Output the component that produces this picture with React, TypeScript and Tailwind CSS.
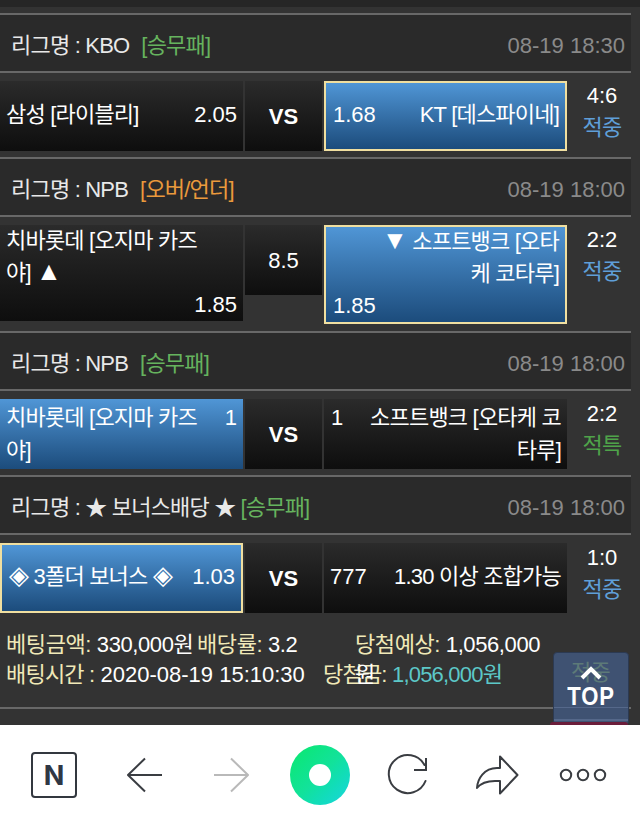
const blueCell = 'bg-gradient-to-b from-[#5096d6] to-[#1c4c7c]';
const darkCell = 'bg-gradient-to-b from-[#2b2b2b] to-[#0e0e0e]';
const ko = 'tracking-[-0.8px]';
const koLoose = 'tracking-[-0.4px]';

const Header = ({ league, tag, tagClass, time }: { league: string; tag: string; tagClass: string; time: string }) => (
  <div className="box-content flex h-[52px] items-center justify-between border-y-2 border-[#686868] bg-[#2a2a2a] pl-[11px] pr-[6px] pt-[4px]">
    <div className={`flex items-center text-[#e8e8e8] ${ko}`}>
      <span>{league}</span>
      <span className={tagClass}>{tag}</span>
    </div>
    <span className="text-[#8a8a8a]">{time}</span>
  </div>
);

const Score = ({ score, result, color }: { score: string; result: string; color: string }) => (
  <div className="flex flex-1 flex-col items-center pl-[4px] leading-[30px]">
    <span className="text-white">{score}</span>
    <span className={`mt-[2px] ${color} ${ko}`}>{result}</span>
  </div>
);

const App = () => {
  return (
    <div className="relative flex h-[825px] w-[640px] flex-col overflow-hidden bg-[#333333] text-[22px] leading-[33px] [font-family:'Liberation_Sans','Noto_Sans_CJK_KR',sans-serif]">
      <div className="flex-1 overflow-hidden">
        <div className="h-[7px] bg-[#262626]" />
        <div className="w-[631px] pt-[6px]">
          {/* KBO */}
          <Header league="리그명 : KBO" tag="[승무패]" tagClass="ml-[12px] text-[#66b35e]" time="08-19 18:30" />
          <div className="flex gap-[2px] pb-[6px] pt-[8px] text-white">
            <div className={`flex h-[70px] w-[243px] items-center justify-between pb-[4px] pl-[6px] pr-[6px] ${darkCell}`}>
              <span className={ko}>삼성 [라이블리]</span>
              <span>2.05</span>
            </div>
            <div className={`flex h-[70px] w-[77px] items-center justify-center text-[22px] font-bold ${darkCell}`}>VS</div>
            <div className={`flex h-[70px] w-[243px] items-center justify-between border-2 border-[#f0dfa0] pb-[4px] pl-[7px] pr-[6px] ${blueCell}`}>
              <span>1.68</span>
              <span className={ko}>KT [데스파이네]</span>
            </div>
            <Score score="4:6" result="적중" color="text-[#5f9fd8]" />
          </div>

          {/* NPB over/under */}
          <Header league="리그명 : NPB" tag="[오버/언더]" tagClass="ml-[12px] text-[#eb9a3c]" time="08-19 18:00" />
          <div className="flex items-start gap-[2px] pb-[7px] pt-[8px] text-white">
            <div className={`h-[96px] w-[243px] pl-[6px] pr-[6px] leading-[32px] ${darkCell}`}>
              <div className={`w-[200px] ${ko}`}>치바롯데 [오지마 카즈 야] <span className="text-[26px] leading-none">▲</span></div>
              <div className="text-right">1.85</div>
            </div>
            <div className={`flex h-[70px] w-[77px] items-center justify-center ${darkCell}`}>8.5</div>
            <div className={`h-[99px] w-[243px] border-2 border-[#f0dfa0] pl-[7px] pr-[6px] leading-[32px] ${blueCell}`}>
              <div className={`-mt-px text-right ${ko}`}>
                <span className="text-[26px] leading-none">▼</span> 소프트뱅크 [오타
                <br />
                케 코타루]
              </div>
              <div>1.85</div>
            </div>
            <Score score="2:2" result="적중" color="text-[#5f9fd8]" />
          </div>

          {/* NPB 1x2 */}
          <Header league="리그명 : NPB" tag="[승무패]" tagClass="ml-[12px] text-[#66b35e]" time="08-19 18:00" />
          <div className="flex gap-[2px] pb-[6px] pt-[8px] text-white">
            <div className={`flex h-[70px] w-[243px] items-start justify-between pl-[6px] pr-[6px] pt-[2px] ${blueCell}`}>
              <span className={`w-[200px] ${ko}`}>치바롯데 [오지마 카즈 야]</span>
              <span>1</span>
            </div>
            <div className={`flex h-[70px] w-[77px] items-center justify-center text-[22px] font-bold ${darkCell}`}>VS</div>
            <div className={`flex h-[70px] w-[243px] items-start justify-between pl-[7px] pr-[6px] pt-[2px] ${darkCell}`}>
              <span>1</span>
              <span className={`w-[200px] text-right ${ko}`}>소프트뱅크 [오타케 코타루]</span>
            </div>
            <Score score="2:2" result="적특" color="text-[#4fa34a]" />
          </div>

          {/* Bonus */}
          <Header league="리그명 : ★ 보너스배당 ★" tag="[승무패]" tagClass="ml-[5px] text-[#66b35e]" time="08-19 18:00" />
          <div className="flex gap-[2px] pt-[8px] text-white">
            <div className={`flex h-[70px] w-[243px] items-center justify-between border-2 border-[#f0dfa0] pb-[4px] pl-[7px] pr-[6px] ${blueCell}`}>
              <span className={ko}><span className="text-[26px] leading-none">◈</span> 3폴더 보너스 <span className="text-[26px] leading-none">◈</span></span>
              <span>1.03</span>
            </div>
            <div className={`flex h-[70px] w-[77px] items-center justify-center text-[22px] font-bold ${darkCell}`}>VS</div>
            <div className={`flex h-[70px] w-[243px] items-center justify-between pb-[4px] pl-[6px] pr-[6px] ${darkCell}`}>
              <span>777</span>
              <span className={ko}>1.30 이상 조합가능</span>
            </div>
            <Score score="1:0" result="적중" color="text-[#5f9fd8]" />
          </div>

          {/* Bet summary */}
          <div className="relative whitespace-nowrap border-b-2 border-[#686868] pb-[17px] pl-[6px] pt-[17px] leading-[30px] text-[#f0e9b8]">
            <div className="flex">
              <span className={`w-[191px] ${koLoose}`}>베팅금액: <span className="text-white">330,000원</span></span>
              <span className={`w-[158px] ${koLoose}`}>배당률: <span className="text-white">3.2</span></span>
              <span className={koLoose}>당첨예상: <span className="text-white">1,056,000</span></span>
            </div>
            <div className="flex">
              <span className="w-[317px]"><span className={ko}>배팅시간 :</span> <span className="text-white">2020-08-19 15:10:30</span></span>
              <span className={ko}>당첨금: <span className="text-[#5cc8c8]">1,056,000원</span></span>
            </div>
            <span className="absolute left-[355px] top-[47px] text-white">원</span>
          </div>
        </div>
      </div>

      {/* Top button */}
      <div className="absolute left-[553px] top-[652px] flex h-[73px] w-[76px] flex-col items-center rounded-[4px] border border-[#2c3a52] bg-[#3f5272]">
        <span className={`absolute left-[17px] top-[3px] text-[#5d7a78] ${ko}`}>적중</span>
        <svg viewBox="0 0 24 14" className="relative mt-[13px] h-[14px] w-[24px]">
          <path d="M3 12 L12 3 L21 12" fill="none" stroke="#ffffff" strokeWidth="4" />
        </svg>
        <span className="relative mt-[1px] scale-x-85 text-[26px] font-bold leading-[30px] tracking-[1px] text-white">TOP</span>
        <div className="absolute left-0 right-0 top-[54px] h-[1px] bg-[#55688a]" />
        <div className="absolute left-0 right-0 top-[66px] h-[2px] bg-[#55688a]" />
      </div>
      <div className="absolute left-[550px] top-[722px] h-[3px] w-[78px] rounded-t-[3px] bg-[#6b1d3a]" />

      {/* Browser toolbar */}
      <div className="flex h-[100px] items-center bg-white pl-[10px] pr-[9px]">
        <div className="flex w-[88px] justify-center">
          <div className="flex h-[46px] w-[46px] items-center justify-center rounded-[4px] border-[2.5px] border-[#33383f] text-[27px] font-bold leading-none text-[#2f3744] [font-family:Inter,sans-serif]">
            N
          </div>
        </div>
        <div className="flex w-[88px] justify-center">
          <svg viewBox="0 0 36 36" className="h-[36px] w-[36px] translate-x-[3px]">
            <path d="M35 18 H1 M18 1.5 L1 18 L18 34.5" fill="none" stroke="#3a3d42" strokeWidth="2" strokeLinejoin="round" />
          </svg>
        </div>
        <div className="flex w-[88px] justify-center">
          <svg viewBox="0 0 36 36" className="h-[36px] w-[36px] translate-x-[1px]">
            <path d="M1 18 H35 M18 1.5 L35 18 L18 34.5" fill="none" stroke="#b9b9b9" strokeWidth="2" strokeLinejoin="round" />
          </svg>
        </div>
        <div className="flex w-[88px] justify-center">
          <div className="flex h-[60px] w-[60px] translate-x-[2px] items-center justify-center rounded-full bg-gradient-to-br from-[#0ce86a] via-[#12e29a] to-[#1cd4e0]">
            <div className="h-[22px] w-[22px] rounded-full bg-white" />
          </div>
        </div>
        <div className="flex w-[88px] justify-center">
          <svg viewBox="0 0 44 44" className="h-[44px] w-[44px] translate-x-[1px]">
            <path d="M39.5 12 A19 19 0 1 0 40.5 28" fill="none" stroke="#3a3d42" strokeWidth="2" strokeLinecap="round" />
            <path d="M29 17 H41 V5" fill="none" stroke="#3a3d42" strokeWidth="2" />
          </svg>
        </div>
        <div className="flex w-[88px] justify-center">
          <svg viewBox="0 0 44 40" className="h-[40px] w-[44px] translate-x-[3px]">
            <path d="M25 1.5 L42.5 20 L25 38.5 V26 H20 C12 26 6 28 2 33 C2.5 24 9 13 22 13 H25 Z" fill="none" stroke="#3a3d42" strokeWidth="2" strokeLinejoin="round" />
          </svg>
        </div>
        <div className="flex w-[88px] justify-center">
          <svg viewBox="0 0 48 14" className="h-[14px] w-[48px] translate-x-[1px]">
            <circle cx="7" cy="7" r="5.2" fill="none" stroke="#3a3d42" strokeWidth="2" />
            <circle cx="24" cy="7" r="5.2" fill="none" stroke="#3a3d42" strokeWidth="2" />
            <circle cx="41" cy="7" r="5.2" fill="none" stroke="#3a3d42" strokeWidth="2" />
          </svg>
        </div>
      </div>
    </div>
  );
};

export default App;
